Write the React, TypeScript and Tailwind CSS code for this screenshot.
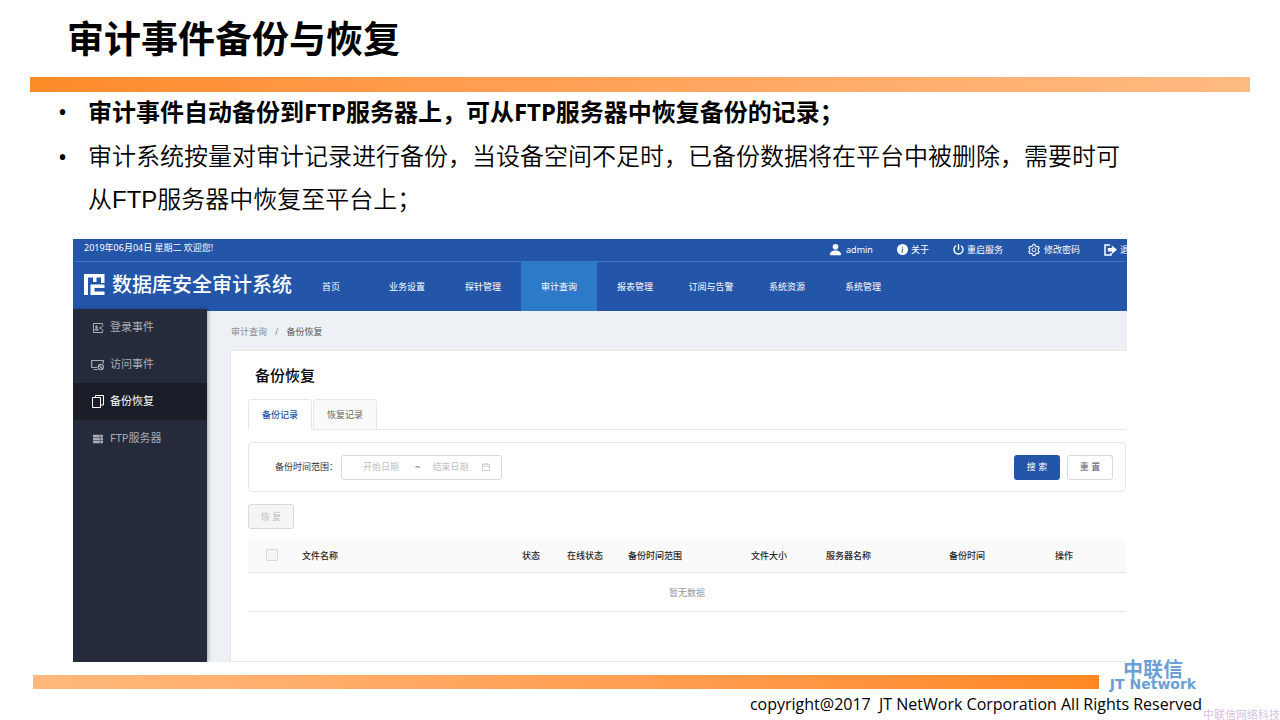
import type { ReactNode } from "react";
import { AiOutlineSetting, AiOutlineCalendar } from "react-icons/ai";
import { FaPowerOff } from "react-icons/fa6";
import { BsInfoCircleFill, BsPersonFill } from "react-icons/bs";

const BrandMark = () => (
  <svg viewBox="0 0 21 21" className="h-[21px] w-[21px] shrink-0" fill="#fff" aria-hidden="true">
    <path d="M0 0h20.500v9H17V3.500h-4.500V8H9V3.500H4V21H0z" />
    <path d="M6.500 10.500H20.500V14H10.500v3.500h10V21h-14z" />
  </svg>
);

const LogoutIcon = () => (
  <svg viewBox="0 0 13 12" className="h-3 w-[13px] shrink-0" aria-hidden="true">
    <path d="M6 1H1v10h6V9" fill="none" stroke="#fff" strokeWidth="1.5" />
    <path d="M7.800 1.500L13 5.800L7.800 10V7.600H3.800V4h4z" fill="#fff" />
  </svg>
);

const LoginEventIcon = () => (
  <svg viewBox="0 0 12 12" className="h-3 w-3" fill="none" stroke="currentColor" aria-hidden="true">
    <path d="M10.500 3V1.500h-9v9h9V9" />
    <circle cx="4.500" cy="4.800" r="1.300" fill="currentColor" stroke="none" />
    <path d="M2.300 8.500q0-2.200 2.200-2.200t2.200 2.200z" fill="currentColor" stroke="none" />
    <path d="M11.500 3.500L8 6l3.500 2.500M7 6h1.500" />
  </svg>
);

const VisitEventIcon = () => (
  <svg viewBox="0 0 13 12" className="h-3 w-[13px]" fill="none" stroke="currentColor" strokeWidth="1.200" aria-hidden="true">
    <path d="M12.300 4.500v-3H.7v7h5.300M2.500 10.500h4" />
    <circle cx="9.800" cy="8" r="2.600" />
    <path d="M8 6.300l3.600 3.400" />
  </svg>
);

const BackupIcon = () => (
  <svg viewBox="0 0 12 13" className="h-[13px] w-3" fill="none" stroke="currentColor" aria-hidden="true">
    <path d="M3.500 2.500v-2h8v9.500H9" />
    <path d="M.5 2.500h8v10h-8z" />
  </svg>
);

const FtpIcon = () => (
  <svg viewBox="0 0 12 10" className="h-[10px] w-3" fill="currentColor" aria-hidden="true">
    <path d="M1 .8h10v2.500H1zM1 3.800h10v2.500H1zM1 6.800h10v2.500H1z" />
    <path d="M7.500 1.600h1v.8h-1zM7.500 4.600h1v.8h-1zM7.500 7.600h1v.8h-1z" fill="#262b3b" />
  </svg>
);

const tools: { label: string; icon: ReactNode }[] = [
  { label: "admin", icon: <BsPersonFill size={15} /> },
  { label: "关于", icon: <BsInfoCircleFill size={11} /> },
  { label: "重启服务", icon: <FaPowerOff size={11} /> },
  { label: "修改密码", icon: <AiOutlineSetting size={14} /> },
  { label: "退出", icon: <LogoutIcon /> },
];

const navs = ["首页", "业务设置", "探针管理", "审计查询", "报表管理", "订阅与告警", "系统资源", "系统管理"];

const menus: { label: string; icon: ReactNode }[] = [
  { label: "登录事件", icon: <LoginEventIcon /> },
  { label: "访问事件", icon: <VisitEventIcon /> },
  { label: "备份恢复", icon: <BackupIcon /> },
  { label: "FTP服务器", icon: <FtpIcon /> },
];

const columns = [
  { label: "文件名称", width: "w-[220px]" },
  { label: "状态", width: "w-[45px]" },
  { label: "在线状态", width: "w-[61px]" },
  { label: "备份时间范围", width: "w-[123px]" },
  { label: "文件大小", width: "w-[75px]" },
  { label: "服务器名称", width: "w-[123px]" },
  { label: "备份时间", width: "w-[106px]" },
  { label: "操作", width: "w-[82px]" },
];

function Header() {
  return (
    <header className="bg-[#2356a8] text-white">
      <div className="flex h-[23px] items-center justify-between border-b border-[#3a75c6] pl-[11px]">
        <span className="pb-1 text-[9px]">2019年06月04日 星期二 欢迎您!</span>
        <div className="-mr-[11px] flex shrink-0 items-center gap-6 pb-px">
          {tools.map((item) => (
            <button key={item.label} type="button" className="flex items-center gap-[3px] text-[9px] whitespace-nowrap">
              {item.icon}
              {item.label}
            </button>
          ))}
        </div>
      </div>
      <div className="flex h-[49px]">
        <div className="flex w-[220px] shrink-0 items-center gap-[7px] pb-1 pl-[11px] text-[20px] font-medium whitespace-nowrap">
          <BrandMark />
          数据库安全审计系统
        </div>
        <nav className="flex">
          {navs.map((item) => (
            <a
              key={item}
              href="#"
              className={
                item === "审计查询"
                  ? "flex w-[76px] items-center justify-center bg-[#2d7ac8] text-[9px]"
                  : "flex w-[76px] items-center justify-center text-[9px]"
              }
            >
              {item}
            </a>
          ))}
        </nav>
      </div>
    </header>
  );
}

function Sidebar() {
  return (
    <aside className="relative -mt-0.5 w-[134px] shrink-0 bg-[#262b3b] shadow-[1px_0_4px_rgba(0,21,41,0.35)]">
      {menus.map((item) => (
        <a
          key={item.label}
          href="#"
          className={
            item.label === "备份恢复"
              ? "flex h-[37px] items-center gap-1.5 bg-[#1b1d28] pl-[18px] text-[11px] text-white"
              : "flex h-[37px] items-center gap-1.5 pl-[18px] text-[11px] text-[#a9abb3]"
          }
        >
          <span className="flex w-[13px] justify-center">{item.icon}</span>
          {item.label}
        </a>
      ))}
    </aside>
  );
}

function SearchBar() {
  return (
    <form className="mt-3 flex h-[50px] items-center justify-between rounded border border-[#e8e8e8] pr-3 pl-[26px]">
      <div className="flex items-center gap-[3px]">
        <label htmlFor="start" className="text-[9px] text-[#333]">备份时间范围：</label>
        <div className="flex h-[25px] w-[161px] items-center rounded-[3px] border border-[#d9d9d9] pr-[10px] pl-[5px]">
          <input
            id="start"
            placeholder="开始日期"
            className="w-[68px] text-center text-[9px] outline-none placeholder:text-[#bfbfbf]"
          />
          <span className="text-[9px] text-[#666]">~</span>
          <input
            aria-label="结束日期"
            placeholder="结束日期"
            className="min-w-0 flex-1 text-center text-[9px] outline-none placeholder:text-[#bfbfbf]"
          />
          <AiOutlineCalendar size={10} className="shrink-0 text-[#bfbfbf]" />
        </div>
      </div>
      <div className="flex gap-[7px]">
        <button type="button" className="h-[25px] w-[46px] rounded-[3px] bg-[#2356a8] text-[9px] text-white">搜 索</button>
        <button type="button" className="h-[25px] w-[46px] rounded-[3px] border border-[#d9d9d9] text-[9px] text-[#595959]">重 置</button>
      </div>
    </form>
  );
}

function BackupTable() {
  return (
    <table className="mt-[10px] w-full table-fixed text-[9px]">
      <thead>
        <tr className="h-[33px] border-b border-[#e8e8e8] bg-[#fafafa] text-left text-[#262626]">
          <th className="w-[43px] pl-[18px]">
            <input
              type="checkbox"
              disabled
              aria-label="全选"
              className="block h-3 w-3 appearance-none rounded-[1px] border border-[#d9d9d9] bg-[#f5f5f5]"
            />
          </th>
          {columns.map((col) => (
            <th key={col.label} className={`${col.width} pl-[11px] font-medium whitespace-nowrap`}>{col.label}</th>
          ))}
        </tr>
      </thead>
      <tbody>
        <tr className="h-[39px] border-b border-[#e8e8e8]">
          <td colSpan={9} className="pt-0.5 text-center text-[#999]">暂无数据</td>
        </tr>
      </tbody>
    </table>
  );
}

function Main() {
  return (
    <main className="min-w-0 flex-1 bg-[#edf1f5] pl-[23px]">
      <div className="flex h-[39px] items-center gap-2 pt-0.5 pl-px text-[9px] text-[#8c8c8c]">
        <a href="#">审计查询</a>
        <span>/</span>
        <span className="text-[#595959]">备份恢复</span>
      </div>
      <section className="border border-r-0 border-[#e3e6ec] bg-white pr-px pb-[49px] pl-[17px]">
        <h2 className="flex h-12 items-center pl-[7px] text-[15px] font-medium text-black">备份恢复</h2>
        <div className="flex h-[31px] gap-px border-b border-[#e8e8e8]">
          <button type="button" className="-mb-px w-16 rounded-t border border-b-0 border-[#e8e8e8] bg-white text-[9px] font-medium text-[#2356a8]">
            备份记录
          </button>
          <button type="button" className="w-16 rounded-t border border-b-0 border-[#e8e8e8] bg-[#fafafa] text-[9px] text-[#666]">
            恢复记录
          </button>
        </div>
        <SearchBar />
        <button type="button" disabled className="mt-3 block h-[25px] w-[46px] rounded-[3px] border border-[#d9d9d9] bg-[#f5f5f5] text-[9px] text-[#bfbfbf]">
          恢 复
        </button>
        <BackupTable />
      </section>
    </main>
  );
}

export default function App() {
  return (
    <div className="relative min-h-screen overflow-hidden bg-white font-['Noto_Sans','Noto_Sans_CJK_SC',sans-serif] text-black">
      <h1 className="flex h-[77px] items-center pl-[67px] text-[37px] font-bold">审计事件备份与恢复</h1>
      <div className="mx-[30px] h-[15px] bg-linear-to-r from-[#ff8b28] to-[#ffbb82]" />

      <ul className="mr-[150px] ml-[58px] text-[24px]">
        <li className="mb-1 flex leading-[39px]">
          <span className="w-[30px] shrink-0">•</span>
          <p className="font-bold">审计事件自动备份到FTP服务器上，可从FTP服务器中恢复备份的记录；</p>
        </li>
        <li className="flex leading-[43px]">
          <span className="w-[30px] shrink-0">•</span>
          <p className="font-['Liberation_Sans','Noto_Sans_CJK_SC',sans-serif] font-[350]">
            审计系统按量对审计记录进行备份，当设备空间不足时，已备份数据将在平台中被删除，需要时可从FTP服务器中恢复至平台上；
          </p>
        </li>
      </ul>

      <div className="mt-[18px] mr-[153px] ml-[73px] overflow-hidden">
        <Header />
        <div className="flex">
          <Sidebar />
          <Main />
        </div>
      </div>

      <footer className="mr-[78px] ml-[33px]">
        <div className="flex h-[27px] items-end gap-[5px]">
          <div className="h-[14px] flex-1 bg-linear-to-r from-[#ffb97c] to-[#ff8823]" />
          <div className="flex w-[98px] flex-col items-center font-bold text-[#6b9fd6]">
            <span className="font-['Noto_Sans_CJK_SC',sans-serif] text-[20px] leading-[20px]">中联信</span>
            <span className="font-['DejaVu_Sans',sans-serif] text-[14px] leading-[10px] whitespace-nowrap">JT Network</span>
          </div>
        </div>
        <p className="text-right font-['Open_Sans',sans-serif] text-[16px] leading-[30px] whitespace-pre">
          copyright@2017  JT NetWork Corporation All Rights Reserved
        </p>
      </footer>
      <span className="absolute right-0 bottom-0 text-[11px] leading-[11px] text-[#d9bfe0]">中联信网络科技</span>
    </div>
  );
}
